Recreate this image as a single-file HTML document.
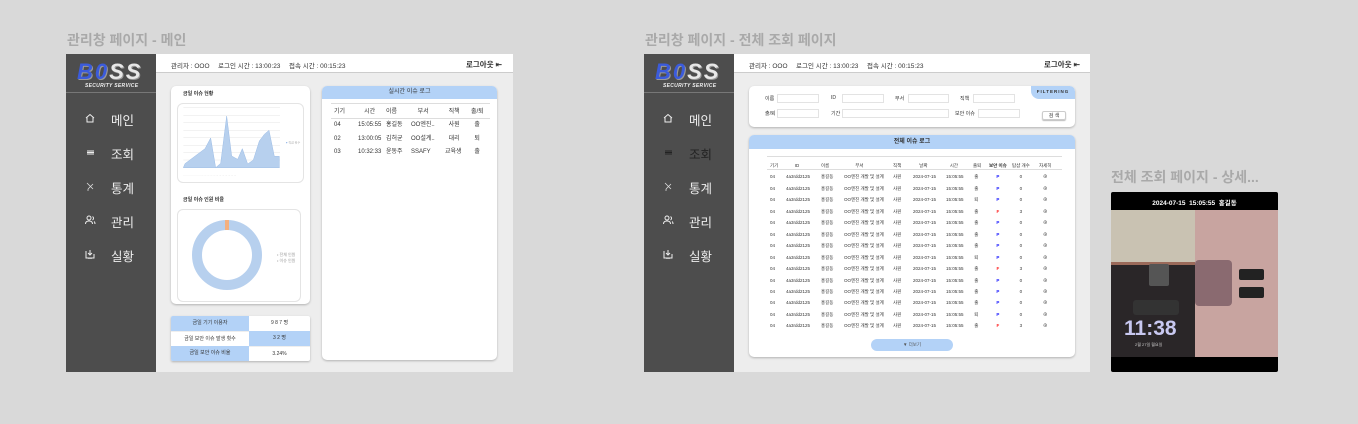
<!DOCTYPE html>
<html><head><meta charset="utf-8"><style>
*{margin:0;padding:0;box-sizing:border-box}
body{width:1358px;height:424px;background:#d9d9d9;position:relative;overflow:hidden;font-family:"Liberation Sans","Noto Sans CJK KR",sans-serif}
.a{position:absolute;white-space:nowrap}
.title{font-size:14px;font-weight:bold;color:#a9a9a9}
.frame{position:absolute;background:#ededed;overflow:hidden}
.side{position:absolute;left:0;top:0;width:90px;height:318px;background:#4d4d4d}
.logo{position:absolute;left:0;top:0;width:90px;height:39px;border-bottom:1px solid #777}
.logo b{position:absolute;left:11px;top:5px;font:italic 900 22px "Liberation Sans",sans-serif;letter-spacing:2px;color:#e8e8e8;text-shadow:1px 1px 0 #999}
.logo b span{color:#3b5bdb}
.logo i{position:absolute;left:19px;top:29px;font:italic bold 5px "Liberation Sans";color:#eee;letter-spacing:.3px}
.nav{position:absolute;left:0;width:90px;color:#eee;font-size:12.5px}
.nav .ic{position:absolute;left:18px;top:2px;width:12px;height:12px}
.nav .t{position:absolute;left:45px;top:0}
.top{position:absolute;left:90px;top:0;right:0;height:19px;background:#fff;border-bottom:1px solid #ccc;font-size:6.5px;color:#333}
.card{position:absolute;background:#fff;border-radius:5px;box-shadow:0 1px 2px rgba(0,0,0,.25)}
.s{font-size:5px;color:#333}
</style></head><body>

<div class="a title" style="left:67px;top:30px">관리창 페이지 - 메인</div>
<div class="a title" style="left:645px;top:30px">관리창 페이지 - 전체 조회 페이지</div>
<div class="a title" style="left:1111px;top:167px">전체 조회 페이지 - 상세...</div>

<!-- FRAME 1 -->
<div class="frame" style="left:66px;top:54px;width:447px;height:318px">
 <div class="side">
  <div class="logo"><b><span>B0</span>SS</b><i>SECURITY SERVICE</i></div>
  <div class="nav" style="top:56px"><svg class="ic" viewBox="0 0 12 12" fill="none" stroke="#eee"><path d="M2 6L6 2.5 10 6M3 5.5V10h6V5.5"/></svg><span class="t">메인</span></div>
  <div class="nav" style="top:90px"><svg class="ic" viewBox="0 0 12 12" stroke="#eee"><path d="M3 5h7M3 6.5h7M3 8h7"/></svg><span class="t">조회</span></div>
  <div class="nav" style="top:124px"><svg class="ic" viewBox="0 0 12 12" fill="none" stroke="#ddd" stroke-width=".8"><path d="M3 3l6 6M9 4L4 9M3 10h2"/></svg><span class="t">통계</span></div>
  <div class="nav" style="top:158px"><svg class="ic" viewBox="0 0 12 12" fill="none" stroke="#eee"><circle cx="5" cy="4" r="2"/><path d="M1.5 10c0-2 1.5-3 3.5-3s3.5 1 3.5 3M8.5 2.5a2 2 0 010 3.5M10 7.5c.8.5 1 1.5 1 2.5"/></svg><span class="t">관리</span></div>
  <div class="nav" style="top:192px"><svg class="ic" viewBox="0 0 12 12" fill="none" stroke="#eee"><path d="M2 3v7h8V6M5 10v1M7 10v1M6 2v5M4 5l2 2 2-2"/></svg><span class="t">실황</span></div>
 </div>
 <div class="top"><span class="a" style="left:15px;top:6px">관리자 : OOO</span><span class="a" style="left:62px;top:6px">로그인 시간 : 13:00:23</span><span class="a" style="left:133px;top:6px">접속 시간 : 00:15:23</span><span class="a" style="left:310px;top:5px;font-weight:bold;font-size:7.5px">로그아웃 ⇤</span></div>
</div>
<div class="card" style="left:171px;top:86px;width:139px;height:218px"></div>
<div class="a s" style="left:183px;top:90px;font-weight:bold">금일 이슈 현황</div>
<div class="card" style="left:178px;top:104px;width:125px;height:78px;box-shadow:0 0 0 1px #e4e4e4"></div>
<svg class="a" style="left:170px;top:86px" width="145" height="110" viewBox="0 0 435 330">
 <g stroke="#e6e6e6" stroke-width="1.5"><path d="M40 65H330M40 88H330M40 110H330M40 133H330M40 155H330M40 178H330M40 200H330M40 222H330M40 245H330"/></g>
 <path d="M40 245L45 233 105 188 122 156 137 245 152 232 170 90 185 210 203 220 217 188 233 234 250 222 268 165 283 145 297 133 313 211 328 211 328 245Z" fill="#b7d0ee" stroke="#9dbde6" stroke-width="1.5"/>
 <circle cx="350" cy="170" r="2" fill="#8fb3e6"/><text x="355" y="173" font-size="9" fill="#aaa">직급 횟수</text>
 <g font-size="7" fill="#aaa"><text x="40" y="268">…  …  …  …  …  …  …  …  …  …  …  …  …  …  …  …  …  …</text></g>
</svg>
<div class="a s" style="left:183px;top:196px;font-weight:bold">금일 이슈 인원 비율</div>
<div class="card" style="left:178px;top:210px;width:122px;height:91px;box-shadow:0 0 0 1px #e4e4e4"></div>
<svg class="a" style="left:190px;top:219px" width="80" height="80" viewBox="0 0 80 80"><circle cx="37" cy="36" r="30" fill="none" stroke="#b7d0ee" stroke-width="10"/><path d="M35 6h4" stroke="#f4b07f" stroke-width="10"/></svg>
<div class="a" style="left:277px;top:252px;font-size:4px;color:#999">• 전체 인원<br>• 이슈 인원</div>
<div class="card" style="left:171px;top:316px;width:139px;height:45px;border-radius:2px;overflow:hidden;font-size:5px;color:#333;text-align:center">
 <div class="a" style="left:0;top:0;width:78px;height:15px;background:#b3d2f7;line-height:15px">금일 기기 이용자</div><div class="a" style="left:78px;top:0;width:61px;height:15px;line-height:15px">9 8 7 명</div>
 <div class="a" style="left:0;top:15px;width:78px;height:15px;line-height:15px;border-top:1px solid #eee">금일 보안 이슈 발생 횟수</div><div class="a" style="left:78px;top:15px;width:61px;height:15px;background:#b3d2f7;line-height:15px">3 2 명</div>
 <div class="a" style="left:0;top:30px;width:78px;height:15px;background:#b3d2f7;line-height:15px">금일 보안 이슈 비율</div><div class="a" style="left:78px;top:30px;width:61px;height:15px;line-height:15px;border-top:1px solid #eee">3.24%</div>
</div>
<div class="card" style="left:322px;top:86px;width:175px;height:274px;overflow:hidden">
 <div style="height:13px;background:#b3d2f7;text-align:center;font-size:6px;line-height:13px;color:#333">실시간 이슈 로그</div>
 <div class="a" style="left:9px;top:17px;width:159px;border-top:1px solid #ddd;border-bottom:1px solid #ddd;height:16px"></div>
 <div style="position:absolute;top:20px;left:0;width:175px;font-size:6px;color:#333;line-height:13.3px">
  <div class="a" style="left:12px">기기<br>04<br>02<br>03</div>
  <div class="a" style="left:36px;text-align:center">시간<br>15:05:55<br>13:00:05<br>10:32:33</div>
  <div class="a" style="left:64px">이름<br>홍길동<br>김허균<br>윤동주</div>
  <div class="a" style="left:89px">&nbsp;&nbsp;&nbsp;&nbsp;부서<br>OO엔진..<br>OO설계..<br>SSAFY</div>
  <div class="a" style="left:123px;text-align:center">&nbsp;직책<br>&nbsp;사원<br>&nbsp;대리<br>교육생</div>
  <div class="a" style="left:149px">출/퇴<br>&nbsp;&nbsp;출<br>&nbsp;&nbsp;퇴<br>&nbsp;&nbsp;출</div>
 </div>
</div>

<!-- FRAME 2 -->
<div class="frame" style="left:644px;top:54px;width:446px;height:318px">
 <div class="side">
  <div class="logo"><b><span>B0</span>SS</b><i>SECURITY SERVICE</i></div>
  <div class="nav" style="top:56px"><svg class="ic" viewBox="0 0 12 12" fill="none" stroke="#eee"><path d="M2 6L6 2.5 10 6M3 5.5V10h6V5.5"/></svg><span class="t">메인</span></div>
  <div class="nav" style="top:90px"><svg class="ic" viewBox="0 0 12 12" stroke="#222"><path d="M3 5h7M3 6.5h7M3 8h7"/></svg><span class="t" style="color:#222">조회</span></div>
  <div class="nav" style="top:124px"><svg class="ic" viewBox="0 0 12 12" fill="none" stroke="#ddd" stroke-width=".8"><path d="M3 3l6 6M9 4L4 9M3 10h2"/></svg><span class="t">통계</span></div>
  <div class="nav" style="top:158px"><svg class="ic" viewBox="0 0 12 12" fill="none" stroke="#eee"><circle cx="5" cy="4" r="2"/><path d="M1.5 10c0-2 1.5-3 3.5-3s3.5 1 3.5 3M8.5 2.5a2 2 0 010 3.5M10 7.5c.8.5 1 1.5 1 2.5"/></svg><span class="t">관리</span></div>
  <div class="nav" style="top:192px"><svg class="ic" viewBox="0 0 12 12" fill="none" stroke="#eee"><path d="M2 3v7h8V6M5 10v1M7 10v1M6 2v5M4 5l2 2 2-2"/></svg><span class="t">실황</span></div>
 </div>
 <div class="top"><span class="a" style="left:15px;top:6px">관리자 : OOO</span><span class="a" style="left:62px;top:6px">로그인 시간 : 13:00:23</span><span class="a" style="left:133px;top:6px">접속 시간 : 00:15:23</span><span class="a" style="left:310px;top:5px;font-weight:bold;font-size:7.5px">로그아웃 ⇤</span></div>
</div>
<div class="card" style="left:749px;top:86px;width:326px;height:41px;overflow:hidden;font-size:5px;color:#333">
 <div class="a" style="right:0;top:0;width:44px;height:13px;background:#b3d2f7;border-radius:0 5px 0 8px;font-size:4.5px;font-weight:bold;text-align:center;line-height:11px;letter-spacing:1px">FILTERING</div>
 <span class="a" style="left:16px;top:9px">이름</span><div class="a" style="left:28px;top:8px;width:42px;height:9px;border:1px solid #e3e3e3"></div>
 <span class="a" style="left:82px;top:9px">ID</span><div class="a" style="left:93px;top:8px;width:42px;height:9px;border:1px solid #e3e3e3"></div>
 <span class="a" style="left:146px;top:9px">부서</span><div class="a" style="left:159px;top:8px;width:41px;height:9px;border:1px solid #e3e3e3"></div>
 <span class="a" style="left:211px;top:9px">직책</span><div class="a" style="left:224px;top:8px;width:42px;height:9px;border:1px solid #e3e3e3"></div>
 <span class="a" style="left:16px;top:24px">출/퇴</span><div class="a" style="left:28px;top:23px;width:42px;height:9px;border:1px solid #e3e3e3"></div>
 <span class="a" style="left:82px;top:24px">기간</span><div class="a" style="left:93px;top:23px;width:107px;height:9px;border:1px solid #e3e3e3"></div>
 <span class="a" style="left:206px;top:24px">보안 이슈</span><div class="a" style="left:229px;top:23px;width:42px;height:9px;border:1px solid #e3e3e3"></div>
 <div class="a" style="left:293px;top:25px;width:24px;height:9px;border:1px solid #ccc;border-radius:2px;text-align:center;line-height:8px;box-shadow:0 1px 1px #bbb">검 색</div>
</div>
<div class="card" style="left:749px;top:135px;width:326px;height:222px;overflow:hidden;font-size:4.5px;color:#333">
 <div style="height:14px;background:#b3d2f7;text-align:center;font-size:6px;line-height:14px;font-weight:bold">전체 이슈 로그</div>
 <div class="a" style="left:18px;top:21px;width:295px;height:14px;border-top:1px solid #ddd;border-bottom:1px solid #ddd"></div>
 <div class="a" style="left:0;top:25px;width:326px;line-height:11.45px">
  <div class="a" style="left:21px">기기<br>04<br>04<br>04<br>04<br>04<br>04<br>04<br>04<br>04<br>04<br>04<br>04<br>04<br>04</div>
  <div class="a" style="left:37px">&nbsp;&nbsp;&nbsp;&nbsp;&nbsp;&nbsp;&nbsp;ID<br>4a3rdd2125<br>4a3rdd2125<br>4a3rdd2125<br>4a3rdd2125<br>4a3rdd2125<br>4a3rdd2125<br>4a3rdd2125<br>4a3rdd2125<br>4a3rdd2125<br>4a3rdd2125<br>4a3rdd2125<br>4a3rdd2125<br>4a3rdd2125<br>4a3rdd2125</div>
  <div class="a" style="left:72px">이름<br>홍길동<br>홍길동<br>홍길동<br>홍길동<br>홍길동<br>홍길동<br>홍길동<br>홍길동<br>홍길동<br>홍길동<br>홍길동<br>홍길동<br>홍길동<br>홍길동</div>
  <div class="a" style="left:95px">&nbsp;&nbsp;&nbsp;&nbsp;&nbsp;&nbsp;&nbsp;&nbsp;&nbsp;부서<br>OO엔진 개발 및 설계<br>OO엔진 개발 및 설계<br>OO엔진 개발 및 설계<br>OO엔진 개발 및 설계<br>OO엔진 개발 및 설계<br>OO엔진 개발 및 설계<br>OO엔진 개발 및 설계<br>OO엔진 개발 및 설계<br>OO엔진 개발 및 설계<br>OO엔진 개발 및 설계<br>OO엔진 개발 및 설계<br>OO엔진 개발 및 설계<br>OO엔진 개발 및 설계<br>OO엔진 개발 및 설계</div>
  <div class="a" style="left:144px">직책<br>사원<br>사원<br>사원<br>사원<br>사원<br>사원<br>사원<br>사원<br>사원<br>사원<br>사원<br>사원<br>사원<br>사원</div>
  <div class="a" style="left:164px">&nbsp;&nbsp;&nbsp;&nbsp;&nbsp;날짜<br>2024-07-15<br>2024-07-15<br>2024-07-15<br>2024-07-15<br>2024-07-15<br>2024-07-15<br>2024-07-15<br>2024-07-15<br>2024-07-15<br>2024-07-15<br>2024-07-15<br>2024-07-15<br>2024-07-15<br>2024-07-15</div>
  <div class="a" style="left:197px">&nbsp;&nbsp;&nbsp;시간<br>15:05:55<br>15:05:55<br>15:05:55<br>15:05:55<br>15:05:55<br>15:05:55<br>15:05:55<br>15:05:55<br>15:05:55<br>15:05:55<br>15:05:55<br>15:05:55<br>15:05:55<br>15:05:55</div>
  <div class="a" style="left:224px">출퇴<br>&nbsp;출<br>&nbsp;출<br>&nbsp;퇴<br>&nbsp;출<br>&nbsp;출<br>&nbsp;출<br>&nbsp;출<br>&nbsp;퇴<br>&nbsp;출<br>&nbsp;출<br>&nbsp;출<br>&nbsp;출<br>&nbsp;퇴<br>&nbsp;출</div>
  <div class="a" style="left:240px;text-align:center;font-weight:bold">보안 이슈<br><span style="color:#22f">P</span><br><span style="color:#22f">P</span><br><span style="color:#22f">P</span><br><span style="color:#f22">F</span><br><span style="color:#22f">P</span><br><span style="color:#22f">P</span><br><span style="color:#22f">P</span><br><span style="color:#22f">P</span><br><span style="color:#f22">F</span><br><span style="color:#22f">P</span><br><span style="color:#22f">P</span><br><span style="color:#22f">P</span><br><span style="color:#22f">P</span><br><span style="color:#f22">F</span></div>
  <div class="a" style="left:263px;text-align:center">탐샵 개수<br>0<br>0<br>0<br>3<br>0<br>0<br>0<br>0<br>3<br>0<br>0<br>0<br>0<br>3</div>
  <div class="a" style="left:290px;text-align:center">자세히<br>⊕<br>⊕<br>⊕<br>⊕<br>⊕<br>⊕<br>⊕<br>⊕<br>⊕<br>⊕<br>⊕<br>⊕<br>⊕<br>⊕</div>
 </div>
 <div class="a" style="left:122px;top:204px;width:82px;height:12px;background:#b3d2f7;border-radius:6px;text-align:center;line-height:12px;color:#555">▼ 더보기</div>
</div>

<!-- FRAME 3 -->
<div class="a" style="left:1111px;top:192px;width:167px;height:180px;background:#000;border-radius:2px;overflow:hidden">
 <div class="a" style="left:0;top:5px;width:167px;text-align:center;color:#fff;font-size:6.5px;font-weight:bold">2024-07-15&nbsp;&nbsp;15:05:55&nbsp;&nbsp;홍길동</div>
 <div class="a" style="left:0;top:18px;width:84px;height:147px;background:#c9c2b2"></div>
 <div class="a" style="left:84px;top:18px;width:83px;height:147px;background:#c8a4a0"></div>
 <div class="a" style="left:0;top:70px;width:84px;height:95px;background:#2a2628;border-top:3px solid #9b6a5a"></div>
 <div class="a" style="left:84px;top:68px;width:37px;height:46px;background:#8a6a70;border-radius:4px"></div>
 <div class="a" style="left:38px;top:72px;width:20px;height:22px;background:#555;border-radius:2px"></div>
 <div class="a" style="left:22px;top:108px;width:46px;height:15px;background:#333;border-radius:3px"></div>
 <div class="a" style="left:128px;top:77px;width:25px;height:11px;background:#222;border-radius:2px"></div>
 <div class="a" style="left:128px;top:95px;width:25px;height:11px;background:#222;border-radius:2px"></div>
 <div class="a" style="left:13px;top:125px;color:#c8c8f0;font-size:21px;font-weight:bold">11:38</div>
 <div class="a" style="left:24px;top:150px;color:#ccc;font-size:4px">2월 27일 월요일</div>
</div>
</body></html>
